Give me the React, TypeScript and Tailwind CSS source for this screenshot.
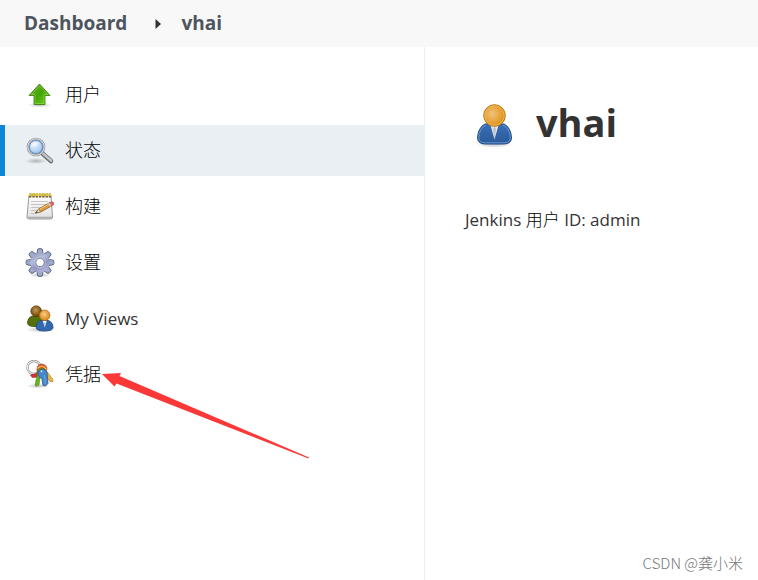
import type { ReactNode } from 'react';

function UpIcon() {
  return (
    <svg viewBox="0 0 30 30" className="size-[30px] shrink-0" aria-hidden="true">
      <defs>
        <linearGradient id="up" x1="0" y1="0" x2="1" y2="1">
          <stop offset="0" stopColor="#6fae2c" />
          <stop offset="0.5" stopColor="#43a405" />
          <stop offset="1" stopColor="#6fdc1c" />
        </linearGradient>
        <radialGradient id="shade">
          <stop offset="0" stopColor="#000" stopOpacity="0.25" />
          <stop offset="1" stopColor="#000" stopOpacity="0" />
        </radialGradient>
      </defs>
      <ellipse cx="14.5" cy="25" rx="12" ry="2.5" fill="url(#shade)" />
      <path d="M14.5 4 25 15.5H20V24.5H9V15.5H4Z" fill="url(#up)" stroke="#3a7304" strokeWidth="0.8" strokeLinejoin="round" />
      <path d="M14.5 5.8 22.6 14.5H19V23.5H10V14.5H6.4Z" fill="none" stroke="#a3e06a" strokeOpacity="0.5" />
    </svg>
  );
}

function SearchIcon() {
  return (
    <svg viewBox="0 0 30 30" className="size-[30px] shrink-0" aria-hidden="true">
      <defs>
        <radialGradient id="lens" cx="0.4" cy="0.35" r="0.7">
          <stop offset="0" stopColor="#eaf3fd" />
          <stop offset="0.6" stopColor="#b3d1f3" />
          <stop offset="1" stopColor="#7fabdf" />
        </radialGradient>
      </defs>
      <ellipse cx="11" cy="25" rx="11" ry="3" fill="url(#shade)" />
      <path d="m17.5 17.5 8.5 7.5" stroke="#66686b" strokeWidth="4.5" strokeLinecap="round" />
      <path d="m18 17.5 8 7" stroke="#c2c4c6" strokeWidth="2.7" strokeLinecap="round" strokeDasharray="5 1" />
      <circle cx="11" cy="11" r="8.2" fill="url(#lens)" stroke="#8b8d8e" strokeWidth="2.2" />
      <circle cx="11" cy="11" r="8.2" fill="none" stroke="#e6e8e8" strokeWidth="1" />
      <circle cx="11" cy="11" r="6.6" fill="none" stroke="#5580bd" strokeWidth="0.8" />
      <path d="M6 11a5 5 0 0 1 8-4c-1 3-4 3-8 4Z" fill="#fff" opacity="0.5" />
    </svg>
  );
}

function NotepadIcon() {
  return (
    <svg viewBox="0 0 30 30" className="size-[30px] shrink-0" aria-hidden="true">
      <defs>
        <linearGradient id="paper" x1="0" y1="0" x2="0" y2="1">
          <stop offset="0" stopColor="#fff" />
          <stop offset="1" stopColor="#e0e0de" />
        </linearGradient>
      </defs>
      <path d="M4 3H26L27.5 25Q27.5 27 26 27H4Q2 27 2 25Z" fill="url(#paper)" stroke="#9a9c98" />
      <path d="M2.5 25.5H27" stroke="#aaa" strokeWidth="1.5" />
      <path d="M6 9.5H23M6 12.5H22M6 15.5H19M6 18.5H14M6 21.5H11" stroke="#b9bab8" strokeWidth="0.8" />
      <path d="M4 3.5H26" stroke="#71602a" strokeWidth="4" strokeDasharray="2.4 .9" />
      <path d="M4 2.8H26" stroke="#e6cb2f" strokeWidth="2.6" strokeDasharray="2.4 .9" />
      <path d="m10.5 21 3.2-4.1L25 10.5l2 3.3L15.5 20Z" fill="#dc9a3b" stroke="#7b4b11" strokeWidth="0.7" />
      <path d="m14.5 17.3 11-6.1" stroke="#ffd08a" strokeWidth="0.9" />
      <path d="m10.5 21 3.2-4.1 1.8 3.1Z" fill="#f3dfbb" stroke="#72582f" strokeWidth="0.5" />
      <path d="m10.5 21 1.4-1.8.8 1.4Z" fill="#222" />
      <path d="m24 11 2.8-1.4q2.5.6 1.8 3.1L26 14.3Z" fill="#e36a67" stroke="#963a38" strokeWidth="0.5" />
      <path d="m23.2 11.5 1.3-.8 1.9 3.3-1.3.7Z" fill="#c8ccd0" />
    </svg>
  );
}

const teeth = [0, 45, 90, 135, 180, 225, 270, 315];

function GearIcon() {
  return (
    <svg viewBox="0 0 30 30" className="size-[30px] shrink-0" aria-hidden="true">
      <defs>
        <linearGradient id="gear" gradientUnits="userSpaceOnUse" x1="6" y1="2" x2="20" y2="28">
          <stop offset="0" stopColor="#8295b3" />
          <stop offset="0.4" stopColor="#b3bbd8" />
          <stop offset="0.6" stopColor="#9195c2" />
          <stop offset="1" stopColor="#c5c4e0" />
        </linearGradient>
      </defs>
      <ellipse cx="15" cy="27" rx="11" ry="2.5" fill="url(#shade)" />
      {teeth.map(a => (
        <path key={a} d="M11.6 7 12.8 1Q15 0 17.2 1L18.4 7Z" transform={`rotate(${a} 15 14.5)`} fill="#a0a9cb" stroke="#55627e" strokeWidth="0.9" />
      ))}
      <circle cx="15" cy="14.5" r="9.8" fill="url(#gear)" />
      <circle cx="15" cy="14.5" r="5.4" fill="none" stroke="#c9cde4" strokeWidth="0.7" />
      <circle cx="15" cy="14.5" r="4.2" fill="#fff" stroke="#66718f" strokeWidth="0.8" />
    </svg>
  );
}

function PeopleIcon() {
  return (
    <svg viewBox="0 0 30 30" className="size-[30px] shrink-0" aria-hidden="true">
      <defs>
        <radialGradient id="tan" cx="0.45" cy="0.4">
          <stop offset="0" stopColor="#c19a5b" />
          <stop offset="1" stopColor="#7c5009" />
        </radialGradient>
        <radialGradient id="face" cx="0.45" cy="0.4">
          <stop offset="0" stopColor="#f8cd87" />
          <stop offset="1" stopColor="#dd9228" />
        </radialGradient>
      </defs>
      <ellipse cx="15" cy="25.5" rx="14" ry="3" fill="url(#shade)" />
      <path d="M2.5 19Q3 12.5 8 12H15Q20 13 20 19Q19 23 11 22.5Q3 23 2.5 19Z" fill="#54700d" stroke="#344605" strokeWidth="0.8" />
      <circle cx="11.2" cy="7.2" r="5.3" fill="url(#tan)" stroke="#623d08" strokeWidth="0.9" />
      <path d="M11.2 24Q11.5 17.5 16 16.5H23Q27.8 17.5 28 24Q27 27 19.5 27Q12 27 11.2 24Z" fill="#3168ae" stroke="#204a87" strokeWidth="0.9" />
      <path d="M17.8 17H21.6L19.8 23.5Z" fill="#f4f6f8" />
      <path d="m19.7 18-.7 1.5.8 4 .8-4Z" fill="#a7c0dd" />
      <circle cx="19.7" cy="11.3" r="5.2" fill="url(#face)" stroke="#b77316" strokeWidth="0.9" />
    </svg>
  );
}

function KeysIcon() {
  return (
    <svg viewBox="0 0 30 30" className="size-[30px] shrink-0" aria-hidden="true">
      <ellipse cx="13" cy="26" rx="12" ry="2.5" fill="url(#shade)" />
      <circle cx="9" cy="7.5" r="6.5" fill="none" stroke="#8b8d8c" strokeWidth="2.4" />
      <circle cx="9" cy="7.5" r="6.5" fill="none" stroke="#f0f0ef" strokeWidth="1.2" />
      <path d="m16 8-5 5.5-5.5 1.5 1.8 2.6 7-.6 5-5Z" fill="#dc2f2f" stroke="#8d1818" strokeWidth="0.5" />
      <path d="m20 9 8 10.5-.3 2.3-2.3.2-7.5-9Z" fill="#e8b63e" stroke="#956b16" strokeWidth="0.5" />
      <path d="M12 11.5Q11 4.5 16.5 4Q22 4.5 22 9.5L20 12Z" fill="#df4d2c" stroke="#942817" strokeWidth="0.5" />
      <path d="M12.5 8.5Q17 3.5 21.5 9.5" fill="none" stroke="#f1b540" strokeWidth="1.6" />
      <path d="M12.5 10.5Q17 6 21 10.5L15 18 14 25 11 26.5 10 24.5 12 16Z" fill="#69b51f" stroke="#397e0c" strokeWidth="0.5" />
      <path d="M13.5 11Q18.5 6.5 22 12L23 23.5 20.5 26 18 25.5 16.8 18.5Q12.5 17 13 13Z" fill="#4786cb" stroke="#234f8a" strokeWidth="0.7" />
      <path d="m19.5 15 .8 9" stroke="#79a9de" strokeWidth="0.8" />
      <circle cx="16.5" cy="11.3" r="0.9" fill="#fff" />
    </svg>
  );
}

function UserIcon() {
  return (
    <svg viewBox="0 0 48 48" className="size-12 shrink-0" aria-hidden="true">
      <defs>
        <radialGradient id="head" cx="0.4" cy="0.42" r="0.55">
          <stop offset="0" stopColor="#f1c27b" />
          <stop offset="1" stopColor="#e0951b" />
        </radialGradient>
        <linearGradient id="coat" x1="0" y1="0" x2="0" y2="1">
          <stop offset="0" stopColor="#3770b7" />
          <stop offset="1" stopColor="#2b5998" />
        </linearGradient>
      </defs>
      <ellipse cx="24" cy="44" rx="18" ry="4" fill="url(#shade)" />
      <path d="M7.5 38Q8 27.5 15 24H34Q41 27.5 41.5 38Q41 44 34 44H15Q8 44 7.5 38Z" fill="url(#coat)" stroke="#204a87" />
      <path d="M8.7 38Q9 28.5 16 25M33 25Q40 28.5 40.3 38Q40 42.8 34 42.8H15Q9 42.8 8.7 38" fill="none" stroke="#6f9bd2" strokeWidth="0.9" />
      <path d="M20.5 25 24.5 39.5 28.5 25Z" fill="#e9ecef" />
      <path d="m24.5 26-1.6 3 1.6 10.5 1.6-10.5Z" fill="#bcc2c9" />
      <circle cx="24.5" cy="15.5" r="10.8" fill="url(#head)" stroke="#bd7411" />
      <circle cx="24.5" cy="15.5" r="9.7" fill="none" stroke="#f3bd62" strokeWidth="0.8" />
    </svg>
  );
}

function Arrow() {
  return (
    <svg viewBox="0 0 208 88" className="absolute left-[102px] top-[22px] h-[88px] w-[208px] pointer-events-none" aria-hidden="true">
      <path d="M0 3 19 2 17.5 5 207 86.5 206.5 87.5 14.5 12.5 12.5 15.5Z" fill="#fb3838" />
    </svg>
  );
}

const tasks: { label: string; icon: ReactNode; latin?: boolean; active?: boolean; marked?: boolean }[] = [
  { label: '用户', icon: <UpIcon /> },
  { label: '状态', icon: <SearchIcon />, active: true },
  { label: '构建', icon: <NotepadIcon /> },
  { label: '设置', icon: <GearIcon /> },
  { label: 'My Views', icon: <PeopleIcon />, latin: true },
  { label: '凭据', icon: <KeysIcon />, marked: true },
];

export default function App() {
  return (
    <div className="flex min-h-screen flex-col bg-white font-['Open_Sans','Noto_Sans_CJK_SC',sans-serif] text-[#333]">
      <nav className="flex h-[47px] items-center bg-[#f8f8f8] px-6 text-[19px] font-bold text-[#4d545d]">
        <a href="#dashboard">Dashboard</a>
        <svg viewBox="0 0 6 10" className="ml-7 mr-5 h-2.5 w-[6px]" aria-hidden="true">
          <path d="M0.5 0 6 5 0.5 10Z" fill="#333" />
        </svg>
        <a href="#vhai">vhai</a>
      </nav>

      <div className="grid flex-1 grid-cols-[425fr_333fr]">
        <aside className="border-r border-[#eaeff2] pt-[22px]">
          <ul className="flex flex-col gap-[5px]">
            {tasks.map(task => (
              <li key={task.label} className="relative">
                <a
                  href="#task"
                  className={`flex h-[51px] items-center gap-2.5 border-l-5 pl-5 ${task.latin ? 'text-[17px] font-medium' : 'text-[18px] font-light text-black'} ${task.active ? 'border-[#0b87d5] bg-[#e9eff2]' : 'border-transparent'}`}
                >
                  {task.icon}
                  {task.label}
                </a>
                {task.marked && <Arrow />}
              </li>
            ))}
          </ul>
        </aside>

        <main className="relative px-10 pt-[49px]">
          <div className="flex items-center gap-[18px] pl-[5px]">
            <UserIcon />
            <h1 className="-mt-1 text-[38px] font-bold leading-[60px]">vhai</h1>
          </div>
          <p className="mt-[56px] text-[17px] leading-6">
            Jenkins <span className="font-light text-black">用户</span> ID: admin
          </p>
          <span className="absolute bottom-[5px] right-[15px] font-['Noto_Sans_CJK_SC',sans-serif] text-[15px] font-light leading-6 text-[#777]">CSDN @龚小米</span>
        </main>
      </div>
    </div>
  );
}
